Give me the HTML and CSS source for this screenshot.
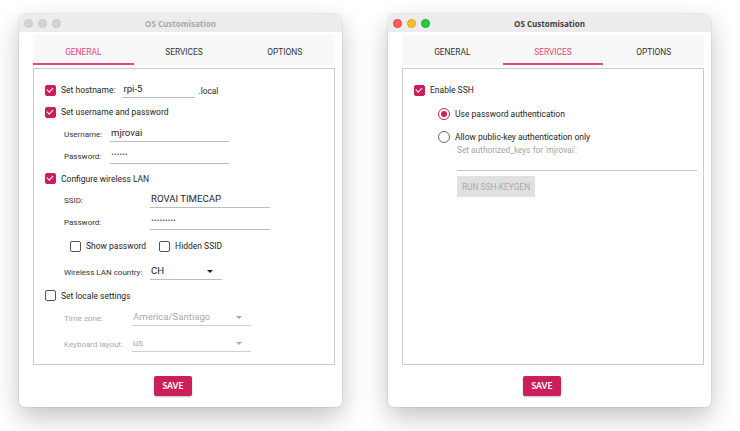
FILE: index.html
```html
<!DOCTYPE html>
<html lang="en">

<head>
    <meta charset="UTF-8">
    <meta name="viewport" content="width=device-width, initial-scale=1.0">
    <title>OS Customisation</title>
    <link rel="stylesheet" href="styles.css">
</head>

<body>
    <div class="desk">
        <!-- general tab, window in background -->
        <div class="win inactive">
            <div class="titlebar">
                <div class="lights"><span></span><span></span><span></span></div>
                <div class="title">OS Customisation</div>
            </div>
            <div class="content">
                <div class="tabs">
                    <div class="tab active">GENERAL</div>
                    <div class="tab">SERVICES</div>
                    <div class="tab">OPTIONS</div>
                </div>
                <div class="panel">
                    <div class="row r1">
                        <span class="chk on"></span><span class="txt">Set hostname:</span>
                        <span class="field host">rpi-5</span><span class="suffix">.local</span>
                    </div>
                    <div class="row r2">
                        <span class="chk on"></span><span class="txt">Set username and password</span>
                    </div>
                    <div class="row r3 sub">
                        <span class="lbl w46">Username:</span><span class="field f119">mjrovai</span>
                    </div>
                    <div class="row r4 sub">
                        <span class="lbl w46">Password:</span><span class="field f119 dots">&bull;&bull;&bull;&bull;&bull;&bull;</span>
                    </div>
                    <div class="row r5">
                        <span class="chk on"></span><span class="txt">Configure wireless LAN</span>
                    </div>
                    <div class="row r6 sub">
                        <span class="lbl w86">SSID:</span><span class="field f120">ROVAI TIMECAP</span>
                    </div>
                    <div class="row r7 sub">
                        <span class="lbl w86">Password:</span><span class="field f120 dots">&bull;&bull;&bull;&bull;&bull;&bull;&bull;&bull;&bull;</span>
                    </div>
                    <div class="row r8 sub2">
                        <span class="chk"></span><span class="txt">Show password</span>
                        <span class="chk gap"></span><span class="txt">Hidden SSID</span>
                    </div>
                    <div class="row r9 sub">
                        <span class="lbl w86">Wireless LAN country:</span>
                        <span class="field select f72">CH<i class="arrow"></i></span>
                    </div>
                    <div class="row r10">
                        <span class="chk"></span><span class="txt">Set locale settings</span>
                    </div>
                    <div class="row r11 sub off">
                        <span class="lbl w68">Time zone:</span>
                        <span class="field select f119">America/Santiago<i class="arrow"></i></span>
                    </div>
                    <div class="row r12 sub off">
                        <span class="lbl w68">Keyboard layout:</span>
                        <span class="field select f119">us<i class="arrow"></i></span>
                    </div>
                </div>
                <div class="actions"><button class="save">SAVE</button></div>
            </div>
        </div>

        <!-- services tab, focused window -->
        <div class="win">
            <div class="titlebar">
                <div class="lights"><span class="red"></span><span class="yellow"></span><span class="green"></span></div>
                <div class="title">OS Customisation</div>
            </div>
            <div class="content">
                <div class="tabs">
                    <div class="tab">GENERAL</div>
                    <div class="tab active">SERVICES</div>
                    <div class="tab">OPTIONS</div>
                </div>
                <div class="panel">
                    <div class="row r1">
                        <span class="chk on"></span><span class="txt">Enable SSH</span>
                    </div>
                    <div class="row s2 radios">
                        <span class="radio on"></span><span class="txt">Use password authentication</span>
                    </div>
                    <div class="row s3 radios">
                        <span class="radio"></span><span class="txt">Allow public-key authentication only</span>
                    </div>
                    <div class="keys">
                        <div class="hint">Set authorized_keys for 'mjrovai':</div>
                        <div class="keyline"></div>
                        <button class="keygen">RUN SSH-KEYGEN</button>
                    </div>
                </div>
                <div class="actions"><button class="save">SAVE</button></div>
            </div>
        </div>
    </div>
</body>

</html>
```

FILE: styles.css
```css
body {
    margin: 0;
    padding: 0;
    background: #ffffff;
    font-family: Roboto, "Liberation Sans", sans-serif;
    color: #1e1e1e;
}

.desk {
    display: flex;
    gap: 46px;
    padding: 14px 0 0 19px;
    width: 740px;
    height: 431px;
    box-sizing: border-box;
    overflow: hidden;
}

.win {
    width: 323px;
    height: 393px;
    background: #fff;
    border-radius: 6px;
    box-shadow: 0 10px 26px rgba(0, 0, 0, 0.24), 0 0 0 1px rgba(0, 0, 0, 0.05);
    overflow: hidden;
    display: flex;
    flex-direction: column;
}

.titlebar {
    height: 18px;
    background: #ececec;
    display: flex;
    align-items: center;
    position: relative;
}

.lights {
    display: flex;
    gap: 5px;
    padding-left: 5px;
}

.lights span {
    width: 7px;
    height: 7px;
    border-radius: 50%;
    background: #d4d4d4;
    border: 0.5px solid #c6c6c6;
}

.lights .red { background: #fe5f57; border-color: #e0443e; }
.lights .yellow { background: #febc2e; border-color: #dea123; }
.lights .green { background: #28c840; border-color: #1aab29; }

.title {
    position: absolute;
    left: 0;
    right: 0;
    text-align: center;
    font-family: "Open Sans", sans-serif;
    font-weight: bold;
    font-size: 8px;
    color: #404040;
}

.inactive .title {
    color: #a8a8a8;
}

.content {
    flex: 1;
    padding: 3px 7px 0 14px;
    display: flex;
    flex-direction: column;
}

.tabs {
    display: flex;
    height: 30px;
    background: #f8f8f8;
}

.tab {
    flex: 1;
    display: flex;
    align-items: center;
    justify-content: center;
    font-size: 8.4px;
    color: #333;
    border-bottom: 2px solid transparent;
    padding-top: 5px;
}

.tab.active {
    color: #e8457c;
    border-bottom-color: #e8457c;
}

.panel {
    margin-top: 3px;
    height: 297px;
    box-sizing: border-box;
    border: 1px solid #cccccc;
    padding: 10px 0 0 11px;
}

.row {
    display: flex;
    align-items: center;
    font-size: 8.5px;
    height: 22px;
}

.r4 { height: 23px; }
.r5 { height: 21px; }
.r8 { height: 26px; }
.r9 { height: 26px; }
.r10 { height: 21px; }
.r11 { height: 24px; }
.r12 { height: 28px; }

.sub { padding-left: 19px; }
.sub2 { padding-left: 25px; }

.chk {
    width: 9px;
    height: 9px;
    border: 1px solid #555;
    border-radius: 2px;
    flex: none;
    position: relative;
}

.chk.on {
    background: #cb1f5c;
    border-color: #cb1f5c;
}

.chk.on::after {
    content: "";
    position: absolute;
    left: 2px;
    top: 0px;
    width: 2.5px;
    height: 5px;
    border: solid #fff;
    border-width: 0 1.5px 1.5px 0;
    transform: rotate(45deg);
}

.chk.gap {
    margin-left: 13px;
}

.txt {
    margin-left: 5px;
    white-space: nowrap;
}

.lbl {
    font-size: 8px;
    color: #333;
    flex: none;
}

.w46 { width: 46px; }
.w68 { width: 68px; }
.w86 { width: 86px; }

.field {
    height: 15px;
    box-sizing: border-box;
    border-bottom: 1px solid #bdbdbd;
    font-size: 9.6px;
    padding: 0 1px 3px;
    display: flex;
    align-items: center;
    position: relative;
}

.host {
    width: 73px;
    margin-left: 7px;
}

.suffix {
    margin-left: 3px;
    font-size: 8.3px;
    padding-top: 1px;
}

.f72 { width: 72px; }
.f119 { width: 119px; }
.f120 { width: 120px; }

.dots {
    font-family: "DejaVu Sans", sans-serif;
    font-size: 5px;
    letter-spacing: -0.2px;
    padding-bottom: 4px;
}

.arrow {
    position: absolute;
    right: 9px;
    top: 5px;
    width: 0;
    height: 0;
    border-left: 3px solid transparent;
    border-right: 3px solid transparent;
    border-top: 3px solid #222;
}

.off .lbl,
.off .field {
    color: #a9a9a9;
}

.off .field {
    border-bottom-color: #d0d0d0;
}

.off .arrow {
    border-top-color: #a9a9a9;
}

.radios {
    padding-left: 24px;
}

.s2 { height: 23px; margin-top: 1px; }
.s3 { height: 23px; }

.radio {
    width: 10px;
    height: 10px;
    border: 1.3px solid #666;
    border-radius: 50%;
    flex: none;
    position: relative;
}

.radio.on {
    border-color: #cb1f5c;
}

.radio.on::after {
    content: "";
    position: absolute;
    left: 2px;
    top: 2px;
    width: 6px;
    height: 6px;
    border-radius: 50%;
    background: #cb1f5c;
}

.keys {
    padding-left: 43px;
    display: flex;
    flex-direction: column;
    align-items: flex-start;
}

.hint {
    font-size: 8.3px;
    color: #a5a5a5;
    margin-top: -3px;
}

.keyline {
    width: 240px;
    height: 1px;
    background: #c4c4c4;
    margin-top: 15px;
}

.keygen {
    margin-top: 5px;
    width: 78px;
    height: 21px;
    border: none;
    background: #e0e0e0;
    color: #a9a9a9;
    font-family: Roboto, sans-serif;
    font-size: 8.4px;
    padding: 0;
}

.actions {
    display: flex;
    justify-content: center;
    padding-right: 22px;
    margin-top: 11px;
}

.save {
    width: 38px;
    height: 20px;
    border: none;
    border-radius: 2px;
    background: #cb1f5c;
    color: #fff;
    font-family: Lato, Roboto, sans-serif;
    font-weight: bold;
    font-size: 8.6px;
    padding: 0;
    box-shadow: 0 1px 2px rgba(0, 0, 0, 0.25);
}
```
